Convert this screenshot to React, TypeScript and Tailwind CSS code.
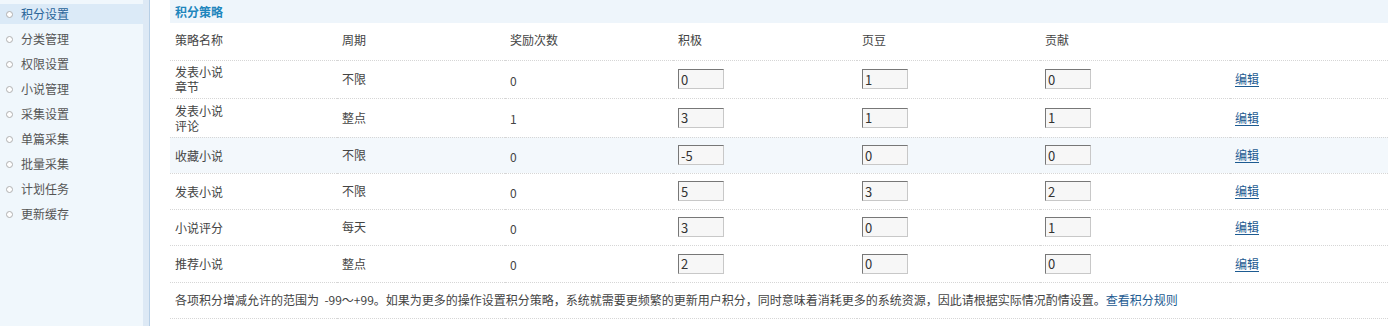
import { type ReactNode } from 'react';

const menu = ['积分设置', '分类管理', '权限设置', '小说管理', '采集设置', '单篇采集', '批量采集', '计划任务', '更新缓存'];

interface Rule {
  name: ReactNode;
  cycle: string;
  times: string;
  active: string;
  bean: string;
  contrib: string;
  h: string;
  hover?: boolean;
}

const rules: Rule[] = [
  { name: <>发表小说<br />章节</>, cycle: '不限', times: '0', active: '0', bean: '1', contrib: '0', h: 'h-[38px]' },
  { name: <>发表小说<br />评论</>, cycle: '整点', times: '1', active: '3', bean: '1', contrib: '1', h: 'h-[39px]' },
  { name: '收藏小说', cycle: '不限', times: '0', active: '-5', bean: '0', contrib: '0', h: 'h-[36px]', hover: true },
  { name: '发表小说', cycle: '不限', times: '0', active: '5', bean: '3', contrib: '2', h: 'h-[36px]' },
  { name: '小说评分', cycle: '每天', times: '0', active: '3', bean: '0', contrib: '1', h: 'h-[36px]' },
  { name: '推荐小说', cycle: '整点', times: '0', active: '2', bean: '0', contrib: '0', h: 'h-[37px]' },
];

function Field({ value }: { value: string }) {
  return (
    <input
      defaultValue={value}
      className="w-[46px] h-[20px] px-[2px] text-[13px] text-[#333] bg-[#f7f7f7] border border-t-[#777] border-l-[#777] border-r-[#c8c8c8] border-b-[#c8c8c8] outline-none"
    />
  );
}

const cell = 'px-[5px] py-0 text-left align-middle border-b border-dotted border-[#d6d6d6]';

export default function App() {
  return (
    <div
      className="flex w-[1388px] h-[326px] bg-white text-[12px] text-[#444]"
      style={{ fontFamily: '"Noto Sans CJK SC", "Liberation Sans", sans-serif' }}
    >
      <div className="w-[143px] bg-[#f0f7fc] pt-[4px]">
        {menu.map((m, i) => (
          <div
            key={m}
            className={`flex items-center h-[20px] mb-[5px] pl-[6px] gap-[8px] ${i === 0 ? 'bg-[#dbeaf7] text-[#2a6599]' : 'text-[#555]'}`}
          >
            <span className="w-[7px] h-[7px] rounded-full border border-[#b0b0b0] bg-white" />
            <span className="leading-[14px]">{m}</span>
          </div>
        ))}
      </div>
      <div className="w-[7px] bg-[#dde9f5] border-r border-[#b7cfe6]" />
      <div className="flex-1 pl-[20px]">
        <div className="h-[23px] bg-[#eef5fb] px-[5px] flex items-center">
          <span className="font-bold text-[#1e86bd] leading-[14px]">积分策略</span>
        </div>
        <table className="w-full border-collapse table-fixed leading-[14px]">
          <colgroup>
            <col className="w-[167px]" />
            <col className="w-[168px]" />
            <col className="w-[168px]" />
            <col className="w-[184px]" />
            <col className="w-[183px]" />
            <col className="w-[190px]" />
            <col />
          </colgroup>
          <thead>
            <tr className="h-[37px]">
              {['策略名称', '周期', '奖励次数', '积极', '页豆', '贡献', ''].map((h, i) => (
                <th key={i} className={`${cell} font-normal pb-[2px]`}>{h}</th>
              ))}
            </tr>
          </thead>
          <tbody>
            {rules.map((r, i) => (
              <tr key={i} className={`${r.h} ${r.hover ? 'bg-[#f3f8fc]' : ''}`}>
                <td className={`${cell} leading-[15px]`}>{r.name}</td>
                <td className={cell}>{r.cycle}</td>
                <td className={`${cell} pt-[3px]`}>{r.times}</td>
                <td className={cell}><Field value={r.active} /></td>
                <td className={cell}><Field value={r.bean} /></td>
                <td className={cell}><Field value={r.contrib} /></td>
                <td className={cell}>
                  <a href="#" className="text-[#1d5b91] underline underline-offset-2">编辑</a>
                </td>
              </tr>
            ))}
            <tr className="h-[36px]">
              <td colSpan={7} className={cell}>
                各项积分增减允许的范围为&nbsp; -99～+99。如果为更多的操作设置积分策略，系统就需要更频繁的更新用户积分，同时意味着消耗更多的系统资源，因此请根据实际情况酌情设置。
                <a href="#" className="text-[#1d5b91]">查看积分规则</a>
              </td>
            </tr>
          </tbody>
        </table>
      </div>
    </div>
  );
}
